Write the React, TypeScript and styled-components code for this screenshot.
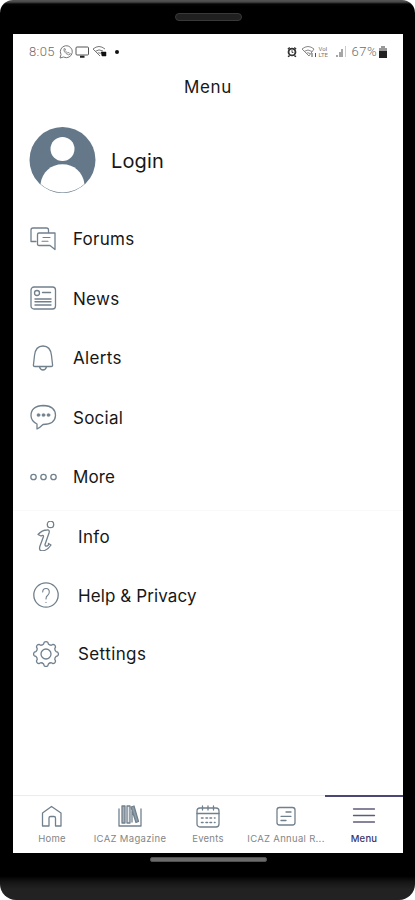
import React from "react";
import styled, { createGlobalStyle } from "styled-components";

const GlobalStyle = createGlobalStyle`
  * { box-sizing: border-box; }
  html, body { margin: 0; background: #fff; }
  body { font-family: Inter, Roboto, "Liberation Sans", sans-serif; color: #171717; }
  svg { display: block; flex: none; }
`;

const Phone = styled.div`
  width: 415px;
  height: 900px;
  display: grid;
  grid-template-rows: 34px 819px 47px;
  padding: 0 12px 0 13px;
  border-radius: 13px 13px 16px 16px;
  overflow: hidden;
  background: linear-gradient(#555 0, #484848 2px, #050505 4px, #000 7px, #000 876px, #151515 882px, #222 889px, #222 900px);
`;

const TopBezel = styled.div`
  display: flex;
  justify-content: center;
  padding-top: 13px;
`;

const Speaker = styled.div`
  width: 67px;
  height: 8px;
  border-radius: 4px;
  border: 1px solid #393939;
  background: #202020;
`;

const BottomBezel = styled.div`
  display: flex;
  justify-content: center;
  padding-top: 4px;
`;

const HomeIndicator = styled.div`
  width: 117px;
  height: 5px;
  border-radius: 2px;
  background: #6b6b6b;
  border: 1px solid #505050;
`;

const Screen = styled.main`
  display: flex;
  flex-direction: column;
  background: #fff;
  min-width: 0;
`;

const StatusBar = styled.div`
  height: 34px;
  display: flex;
  align-items: center;
  justify-content: space-between;
  padding: 1px 16px 0;
  color: #6c6c6c;
  font: 400 13px Roboto, sans-serif;
`;

const StatusGroup = styled.div<{ $gap: number }>`
  display: flex;
  align-items: center;
  gap: ${(p) => p.$gap}px;
`;

const StatusText = styled.span<{ $spacing: number }>`
  font-weight: 300;
  letter-spacing: ${(p) => p.$spacing}px;
`;

const Title = styled.h1`
  height: 38px;
  margin: 0;
  text-align: center;
  font-size: 17px;
  line-height: 38px;
  font-weight: 400;
  letter-spacing: 0.65px;
`;

const Profile = styled.div`
  height: 103px;
  display: flex;
  align-items: center;
  gap: 15px;
  padding: 5px 16px 0;
`;

const LoginLabel = styled.span`
  padding-top: 2px;
  font-size: 20px;
  letter-spacing: 0.15px;
  line-height: 24px;
`;

const MenuList = styled.nav<{ $rowHeight: number; $height: number; $divider?: boolean }>`
  display: grid;
  grid-auto-rows: ${(p) => p.$rowHeight}px;
  align-content: start;
  height: ${(p) => p.$height}px;
  ${(p) => p.$divider && "border-bottom: 1px solid #f9f9f9;"}
`;

const MenuRow = styled.a<{ $indent: number; $gap: number }>`
  display: flex;
  align-items: center;
  gap: ${(p) => p.$gap}px;
  padding-left: ${(p) => p.$indent}px;
  color: #171717;
`;

const MenuLabel = styled.span<{ $spacing: number }>`
  padding-top: 1px;
  font-size: 17px;
  line-height: 22px;
  letter-spacing: ${(p) => p.$spacing}px;
  white-space: nowrap;
`;

const SecondaryMenu = styled.div`
  margin-top: -4px;
`;

const TabBar = styled.nav`
  height: 58px;
  margin-top: auto;
  display: grid;
  grid-template-columns: repeat(5, 1fr);
`;

const Tab = styled.a<{ $active?: boolean }>`
  display: flex;
  flex-direction: column;
  align-items: center;
  min-width: 0;
  border-top: ${(p) => (p.$active ? "2px solid #4b4775" : "1px solid #ececec")};
  padding-top: ${(p) => (p.$active ? 6 : 7)}px;
  color: ${(p) => (p.$active ? "#37346b" : "#858585")};
  font-weight: ${(p) => (p.$active ? 500 : 400)};
`;

const TabLabel = styled.span<{ $spacing: number }>`
  margin-top: 4px;
  font-size: 9.5px;
  line-height: 12px;
  letter-spacing: ${(p) => p.$spacing}px;
  white-space: nowrap;
`;

const Outline = styled.svg`
  fill: none;
  stroke: #71808d;
  stroke-width: 1.3;
  stroke-linecap: round;
  stroke-linejoin: round;
`;

const Icon = ({ children }: { children: React.ReactNode }) => (
  <Outline width="28" height="30" viewBox="0 0 28 30">{children}</Outline>
);

const TabIcon = ({ children }: { children: React.ReactNode }) => (
  <Outline width="26" height="26" viewBox="0 0 26 26">{children}</Outline>
);

const Avatar = () => (
  <svg width="67" height="67" viewBox="0 0 67 67">
    <defs><clipPath id="avatar"><circle cx="33.5" cy="33" r="32.6" /></clipPath></defs>
    <circle cx="33.5" cy="33" r="33" fill="#647889" />
    <g clipPath="url(#avatar)" fill="#fff">
      <circle cx="33.5" cy="22" r="12" />
      <path d="M11.5 57C13 45 22 37.2 33.5 37.2S54 45 55.5 57L55 67H12Z" />
    </g>
  </svg>
);

const gearPath = (() => {
  const teeth = 8;
  const points: string[] = [];
  for (let i = 0; i < teeth; i++) {
    const at = (offset: number, r: number) => {
      const a = ((i + offset) / teeth) * Math.PI * 2 - Math.PI / 2;
      return `${(14 + Math.cos(a) * r).toFixed(2)} ${(15 + Math.sin(a) * r).toFixed(2)}`;
    };
    points.push(`${i ? "L" : "M"}${at(-0.2, 11.8)}Q${at(0, 13.2)} ${at(0.2, 11.8)}L${at(0.3, 10.3)}Q${at(0.5, 9.4)} ${at(0.7, 10.3)}`);
  }
  return points.join("") + "Z";
})();

const primary = [
  { label: "Forums", spacing: 0.25, icon: <><path d="M7 17.5H2V6Q2 4 4 4H17.5Q19.5 4 19.5 6V8.5" /><path d="M10 9H26V25.5L21 21.5H10Q8.5 21.5 8.5 20V10.5Q8.5 9 10 9Z" /><path d="M14 13.5H21M13 17.3H19" strokeWidth="1.1" /></> },
  { label: "News", spacing: 0.3, icon: <><rect x="2" y="4" width="24.5" height="22" rx="3" /><circle cx="8" cy="10" r="2.5" /><path d="M13.5 9.5H21.5M6 16H22M6 18.8H22M6 22H22" strokeWidth="1.4" /></> },
  { label: "Alerts", spacing: 0.35, icon: <><path d="M6 23.5Q4 23.5 4.5 21.5L5.5 12.5Q6.5 3 14 3T22.5 12.5L23.5 21.5Q24 23.5 22 23.5ZM10.5 24Q11.5 27 14 27T17.5 24" /></> },
  { label: "Social", spacing: 0.25, icon: <><path d="M8 22Q2 19 2 13.5Q2 4 14.5 3.5Q26.5 4 26.5 13.5Q26 22.5 14 22.5Q11 25.5 8 27Z" /><g fill="#71808d" strokeWidth=".4"><circle cx="9.5" cy="13" r="1.6" /><circle cx="14.5" cy="13" r="1.6" /><circle cx="19.5" cy="13" r="1.6" /></g></> },
  { label: "More", spacing: 0.15, icon: <><circle cx="4.5" cy="15" r="2.7" /><circle cx="14.5" cy="15" r="2.7" /><circle cx="24.5" cy="15" r="2.7" /></> },
];

const secondary = [
  { label: "Info", spacing: 0.35, icon: <><circle cx="18.5" cy="3.4" r="3.2" /><path d="M6 13.5Q10 9 15 9Q18 8.5 17 12L13 23.5Q13 25.5 15 25Q17 24.5 16.5 22.5L19 24Q15.5 29.5 10 30Q6.5 29.5 8 25L11.5 15.5Q11.5 13.5 9 15Z" /></> },
  { label: "Help & Privacy", spacing: 0.1, icon: <><circle cx="14" cy="15" r="12.2" /><path d="M10.7 12Q10.7 8.5 14 8.5T17.3 12Q17.3 14 15.5 15.5Q14 16.5 14 19M14 22.3V22.4" strokeWidth="1.1" /></> },
  { label: "Settings", spacing: 0.4, icon: <><path d={gearPath} /><circle cx="14" cy="15" r="5" /></> },
];

const tabs = [
  { label: "Home", spacing: 0.25, icon: <path d="M3.5 10L12.5 3.5L22 10V23H16.5V15Q16.5 13.5 15 13.5H11.5Q10 13.5 10 15V23H3.5Z" /> },
  { label: "ICAZ Magazine", spacing: 0.33, icon: <><path d="M2 6V23H24V6" /><rect x="5" y="3" width="3" height="17" fill="#a7b0b7" /><rect x="10" y="3" width="3" height="17" fill="#e3e7ea" /><path d="M14 4L17 3L21.5 18.5L19 19.5ZM15 8V19" fill="#8f9ea8" /></> },
  { label: "Events", spacing: 0.25, icon: <><rect x="2" y="5" width="22" height="19" rx="3" /><path d="M2 10.5H24M7.5 3V7M13 3V7M18.5 3V7" /><path d="M6.5 15H8M11 15H12.5M15 15H16.5M19.5 15H20M6.5 19.5H8M11 19.5H12.5M15 19.5H16.5M19.5 19.5H20" strokeWidth="1.6" /></> },
  { label: "ICAZ Annual R...", spacing: 0.3, icon: <><rect x="4" y="4.5" width="18" height="17.5" rx="2.5" /><path d="M13 9H18M8 13.3H18M8 17.5H13" /></> },
  { label: "Menu", spacing: 0.2, active: true, icon: <path d="M2.5 6H23.5M2.5 12.5H23.5M2.5 19H23.5" stroke="#5d5c79" /> },
];

const NotificationIcons = () => (
  <svg width="62" height="16" viewBox="0 0 62 16" fill="none" stroke="#777" strokeWidth="1">
    <path d="M1 14L2 10.5A6 6 0 1 1 4.5 13Z" /><path d="M5 4.5Q4 7 7 9.5T11.5 10L10 8.5L8.5 9L6 6.5L6.5 5Z" strokeWidth=".8" />
    <rect x="17" y="3" width="12.5" height="8" rx="1" stroke="#555" /><path d="M21 12.7H25.5" stroke="#222" strokeWidth="2" />
    <path d="M34 5Q40 0 46 5M36 7.5Q40 4.5 44 7M38 9.5Q40 8 41.5 9.5M34 5L41 12" />
    <path d="M42 8H47V12H43Z" fill="#111" stroke="#111" strokeWidth=".5" />
    <circle cx="58" cy="8" r="2" fill="#111" stroke="none" />
  </svg>
);

const AlarmIcon = () => (
  <svg width="10" height="12" viewBox="0 0 11 12" fill="none" stroke="#333">
    <path d="M1 3L3 1M10 3L8 1M1 11L3 10M10 11L8 10" strokeWidth="1.5" /><circle cx="5.5" cy="6" r="3.8" strokeWidth="2" /><path d="M5.5 4V6.5H7" />
  </svg>
);

const NetworkIcons = () => (
  <svg width="46" height="15" viewBox="0 0 46 15" fill="none" stroke="#888">
    <path d="M1 5Q7 0 13 5M3 7.5Q7 4.5 11 7.5M5 9.5Q7 8 9 9.5M1 5L8 12L13 5" />
    <path d="M11 9V13M14.5 9V13" stroke="#555" />
    <text x="17.5" y="7" fill="#777" stroke="none" fontSize="6" fontFamily="Roboto">VoI</text>
    <text x="17.5" y="13" fill="#777" stroke="none" fontSize="6" fontFamily="Roboto">LTE</text>
    <path d="M36 13V11M39 13V8M41 13V5" strokeWidth="1.5" /><path d="M44.5 13V2" stroke="#ccc" />
  </svg>
);

const BatteryIcon = () => (
  <svg width="8" height="12" viewBox="0 0 8 12"><path d="M2 2V0H6V2H8V12H0V2Z" fill="#999" /><path d="M0 5H8V12H0Z" fill="#222" /></svg>
);

export default function App() {
  return (
    <>
      <GlobalStyle />
      <Phone>
        <TopBezel><Speaker /></TopBezel>
        <Screen>
          <StatusBar>
            <StatusGroup $gap={4}><StatusText $spacing={0.35}>8:05</StatusText><NotificationIcons /></StatusGroup>
            <StatusGroup $gap={4}><AlarmIcon /><NetworkIcons /><StatusGroup $gap={2}><StatusText $spacing={0.5}>67%</StatusText><BatteryIcon /></StatusGroup></StatusGroup>
          </StatusBar>
          <Title>Menu</Title>
          <Profile><Avatar /><LoginLabel>Login</LoginLabel></Profile>
          <MenuList $rowHeight={59.5} $height={302} $divider>
            {primary.map((item) => (
              <MenuRow key={item.label} $indent={16} $gap={16}><Icon>{item.icon}</Icon><MenuLabel $spacing={item.spacing}>{item.label}</MenuLabel></MenuRow>
            ))}
          </MenuList>
          <SecondaryMenu>
            <MenuList $rowHeight={58.7} $height={177}>
              {secondary.map((item) => (
                <MenuRow key={item.label} $indent={19} $gap={18}><Icon>{item.icon}</Icon><MenuLabel $spacing={item.spacing}>{item.label}</MenuLabel></MenuRow>
              ))}
            </MenuList>
          </SecondaryMenu>
          <TabBar>
            {tabs.map((tab) => (
              <Tab key={tab.label} $active={tab.active}><TabIcon>{tab.icon}</TabIcon><TabLabel $spacing={tab.spacing}>{tab.label}</TabLabel></Tab>
            ))}
          </TabBar>
        </Screen>
        <BottomBezel><HomeIndicator /></BottomBezel>
      </Phone>
    </>
  );
}
